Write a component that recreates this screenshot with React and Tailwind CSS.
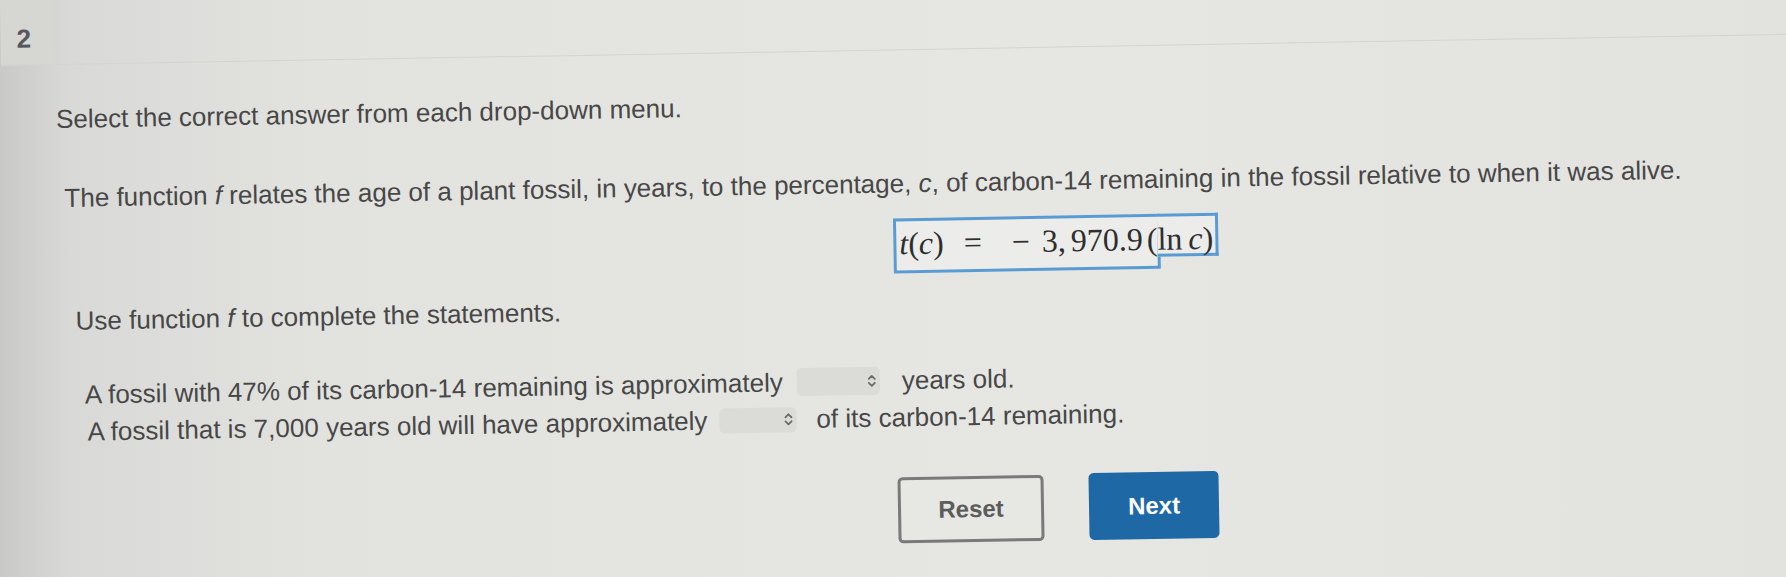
import React from 'react';

// little up/down chevrons shown at the right end of each select
const SelectArrows = () => (
    <svg width="10" height="16" viewBox="0 0 10 16" fill="none" stroke="#6b6b6b" strokeWidth="1.8" strokeLinecap="round" strokeLinejoin="round">
        <path d="M2 6 L5 3 L8 6" />
        <path d="M2 10 L5 13 L8 10" />
    </svg>
);

const Dropdown = ({ width, height }) => (
    <div className={`${width} ${height} flex items-center justify-end rounded-[5px] bg-[#dbdbd7] pr-[3px]`}>
        <SelectArrows />
    </div>
);

const Formula = () => (
    <div className="flex items-start font-['Liberation_Serif','Times_New_Roman',serif] text-[32px] leading-none text-[#2e2e2e]">
        {/* main part of the highlighted expression */}
        <div className="flex h-[55px] items-start border-[3px] border-[#5b9bd3] bg-[#ececea] pl-[3px] pt-[6px]">
            <span><i>t</i>(<i>c</i>)</span>
            <span className="ml-[20px]">=</span>
            <span className="ml-[30px]">−</span>
            <span className="ml-[12px]">3,</span>
            <span className="ml-[5px]">970.9</span>
            <span className="ml-[4px]">(</span>
        </div>
        {/* the log term sits in a shorter box that overlaps the right edge */}
        <div className="-ml-[3px] flex h-[43px] items-start border-[3px] border-l-0 border-[#5b9bd3] bg-[#ececea] pr-[2px] pt-[6px]">
            <span>ln</span>
            <span className="ml-[6px]"><i>c</i>)</span>
        </div>
    </div>
);

const App = () => {
    return (
        <div className="h-[577px] w-full overflow-hidden bg-[linear-gradient(90deg,#c9c9c8_0%,#d9d9d7_4%,#e2e2df_18%,#e6e6e2_60%,#e2e2de_100%)] font-['Liberation_Sans',Arial,sans-serif] text-[#474747]">
            <div className="origin-top-left -rotate-1">
                {/* Question header */}
                <div className="flex h-[66px] border-b border-[#d4d4d0]">
                    <div className="w-[53px] bg-[#d6d6d3] pl-[16px] pt-[26px] text-[26px] font-bold leading-none text-[#55595e]">2</div>
                </div>

                <p className="mt-[39px] pl-[54px] text-[26px] leading-[30px]">
                    Select the correct answer from each drop-down menu.
                </p>

                <p className="mt-[49px] pl-[61px] text-[26px] leading-[30px]">
                    The function <i>f</i> relates the age of a plant fossil, in years, to the percentage, <i>c</i>, of carbon-14 remaining in the fossil relative to when it was alive.
                </p>

                <div className="mt-[20px] flex pl-[889px]">
                    <Formula />
                </div>

                <p className="mt-[18px] pl-[70px] text-[26px] leading-[30px]">
                    Use function <i>f</i> to complete the statements.
                </p>

                {/* Statements with selects */}
                <div className="mt-[44px] flex flex-col gap-[7px] text-[26px] leading-[30px]">
                    <div className="flex h-[30px] items-center pl-[78px]">
                        <span>A fossil with 47% of its carbon-14 remaining is approximately</span>
                        <div className="ml-[14px]">
                            <Dropdown width="w-[83px]" height="h-[28px]" />
                        </div>
                        <span className="ml-[22px]">years old.</span>
                    </div>
                    <div className="flex h-[30px] items-center pl-[80px]">
                        <span>A fossil that is 7,000 years old will have approximately</span>
                        <div className="ml-[12px]">
                            <Dropdown width="w-[77px]" height="h-[25px]" />
                        </div>
                        <span className="ml-[20px]">of its carbon-14 remaining.</span>
                    </div>
                </div>

                {/* Actions */}
                <div className="mt-[45px] flex items-start gap-[45px] pl-[889px]">
                    <button className="h-[66px] w-[146px] rounded-[5px] border-[3px] border-[#7a7a7a] bg-[#e7e7e4] text-[24px] font-bold text-[#5c5c5c]">
                        Reset
                    </button>
                    <button className="-mt-[1px] h-[67px] w-[130px] rounded-[5px] bg-[#1e68a6] text-[24px] font-bold text-white">
                        Next
                    </button>
                </div>
            </div>
        </div>
    );
};

export default App;
